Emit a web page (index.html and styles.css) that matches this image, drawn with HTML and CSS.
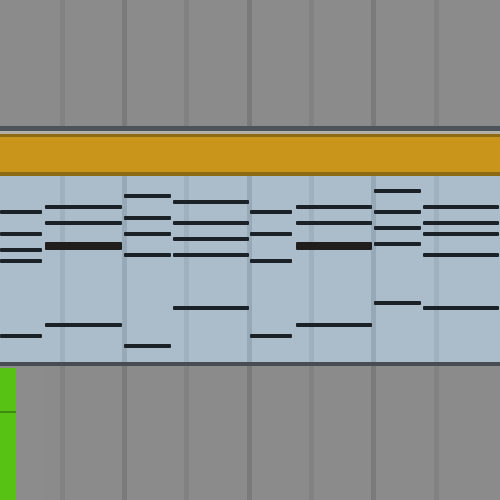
FILE: index.html
```html
<!DOCTYPE html>
<html>
<head>
  <meta charset="UTF-8">
  <title>Arrangement</title>
  <link rel="stylesheet" href="styles.css">
</head>
<body>
  <div class="arrangement">

    <!-- empty track above -->
    <div class="track track-top grid"></div>
    <div class="track-sep"></div>

    <!-- MIDI clip -->
    <div class="clip">
      <div class="clip-head"></div>
      <div class="clip-body grid">
        <!-- beat 1 -->
        <span class="note" style="--x:0;--y:34;--w:43"></span>
        <span class="note" style="--x:0;--y:56;--w:43"></span>
        <span class="note" style="--x:0;--y:72;--w:43"></span>
        <span class="note" style="--x:0;--y:83;--w:43"></span>
        <span class="note" style="--x:0;--y:158;--w:43"></span>

        <span class="note" style="--x:45;--y:29;--w:78"></span>
        <span class="note" style="--x:45;--y:45;--w:78"></span>
        <span class="note thick" style="--x:45;--y:66;--w:78"></span>
        <span class="note" style="--x:45;--y:147;--w:78"></span>

        <!-- beat 2 -->
        <span class="note" style="--x:124;--y:18;--w:48"></span>
        <span class="note" style="--x:124;--y:40;--w:48"></span>
        <span class="note" style="--x:124;--y:56;--w:48"></span>
        <span class="note" style="--x:124;--y:77;--w:48"></span>
        <span class="note" style="--x:124;--y:168;--w:48"></span>

        <span class="note" style="--x:173;--y:24;--w:77"></span>
        <span class="note" style="--x:173;--y:45;--w:77"></span>
        <span class="note" style="--x:173;--y:61;--w:77"></span>
        <span class="note" style="--x:173;--y:77;--w:77"></span>
        <span class="note" style="--x:173;--y:130;--w:77"></span>

        <!-- beat 3 -->
        <span class="note" style="--x:250;--y:34;--w:43"></span>
        <span class="note" style="--x:250;--y:56;--w:43"></span>
        <span class="note" style="--x:250;--y:83;--w:43"></span>
        <span class="note" style="--x:250;--y:158;--w:43"></span>

        <span class="note" style="--x:296;--y:29;--w:77"></span>
        <span class="note" style="--x:296;--y:45;--w:77"></span>
        <span class="note thick" style="--x:296;--y:66;--w:77"></span>
        <span class="note" style="--x:296;--y:147;--w:77"></span>

        <!-- beat 4 -->
        <span class="note" style="--x:374;--y:13;--w:48"></span>
        <span class="note" style="--x:374;--y:34;--w:48"></span>
        <span class="note" style="--x:374;--y:50;--w:48"></span>
        <span class="note" style="--x:374;--y:66;--w:48"></span>
        <span class="note" style="--x:374;--y:125;--w:48"></span>

        <span class="note" style="--x:423;--y:29;--w:77"></span>
        <span class="note" style="--x:423;--y:45;--w:77"></span>
        <span class="note" style="--x:423;--y:56;--w:77"></span>
        <span class="note" style="--x:423;--y:77;--w:77"></span>
        <span class="note" style="--x:423;--y:130;--w:77"></span>
      </div>
    </div>
    <div class="clip-end"></div>

    <!-- track below -->
    <div class="track track-bottom grid">
      <div class="green-clip"></div>
      <div class="shade"></div>
    </div>

  </div>
</body>
</html>
```

FILE: styles.css
```css
body {
  margin: 0;
  background: #8b8b8b;
  font-family: 'Liberation Sans', sans-serif;
}

.arrangement {
  width: 500px;
  height: 500px;
  display: flex;
  flex-direction: column;
  overflow: hidden;
}

/* beat lines, every 4th sixteenth darker */
.grid {
  --bg: #8b8b8b;
  --minor: #828282;
  --major: #7a7a7a;
  background-color: var(--bg);
  background-image: linear-gradient(to right,
    transparent 60px, var(--minor) 60px 65px,
    transparent 65px 122px, var(--major) 122px 127px,
    transparent 127px 184px, var(--minor) 184px 189px,
    transparent 189px 247px, var(--major) 247px 252px,
    transparent 252px 309px, var(--minor) 309px 314px,
    transparent 314px 371px, var(--major) 371px 376px,
    transparent 376px 434px, var(--minor) 434px 439px,
    transparent 439px);
}

.track-top {
  height: 126px;
  flex: none;
}

.track-sep {
  height: 5px;
  background: #4b535b;
  border-bottom: 3px solid #b3b1a7;
  flex: none;
}

.clip {
  flex: none;
}

.clip-head {
  height: 35px;
  background: #c9951b;
  border-top: 3px solid #8d6b13;
  border-bottom: 4px solid #8d6b13;
}

.clip-body {
  --bg: #abbdcb;
  --minor: #9fb1bf;
  --major: #97a9b7;
  position: relative;
  height: 186px;
}

.note {
  position: absolute;
  left: calc(var(--x) * 1px);
  top: calc(var(--y) * 1px);
  width: calc(var(--w) * 1px - 1px);
  height: 4px;
  background: #1a2127;
  border-radius: 1px;
}

.note.thick {
  height: 8px;
  background: #1f1e1c;
}

.clip-end {
  height: 4px;
  background: #474d53;
  flex: none;
}

.track-bottom {
  flex: 1;
  display: flex;
  padding-top: 2px;
}

.green-clip {
  width: 16px;
  background: #58c214;
  background-image: linear-gradient(to bottom,
    transparent 43px, #3e8a10 43px 45px, transparent 45px);
}

.shade {
  width: 28px;
  background: rgba(160, 150, 150, 0.12);
}
```
